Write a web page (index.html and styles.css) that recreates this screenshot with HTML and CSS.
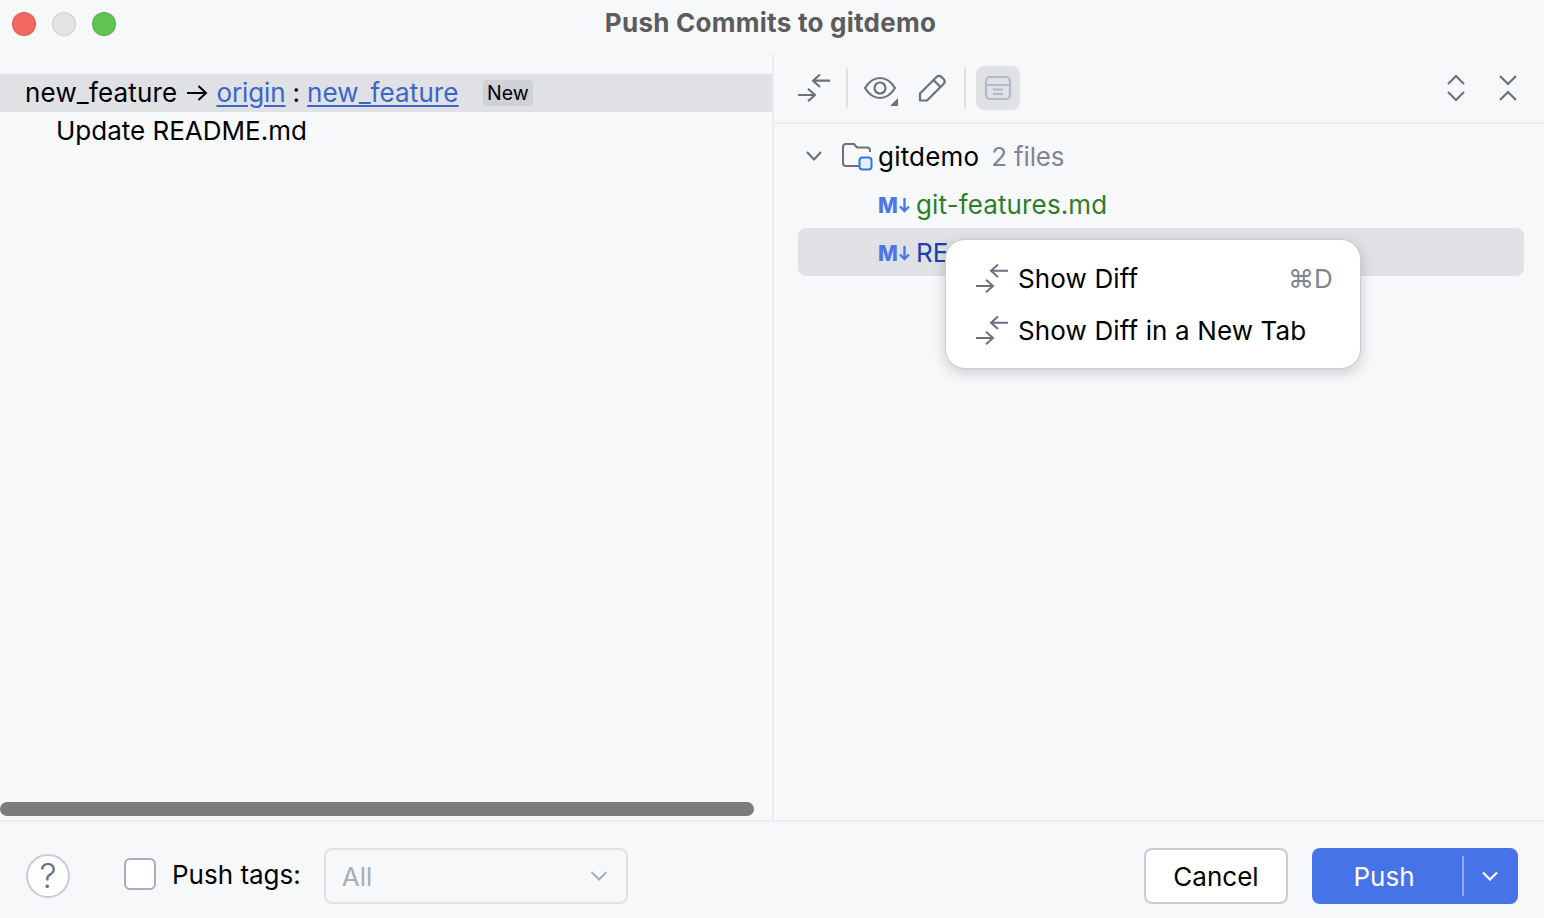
FILE: index.html
```html
<!DOCTYPE html>
<html lang="en">
<head>
    <meta charset="UTF-8">
    <meta name="viewport" content="width=device-width, initial-scale=1.0">
    <title>Push Commits to gitdemo</title>
    <link rel="stylesheet" href="styles.css">
</head>
<body>
    <div class="window">
        <div class="titlebar">
            <div class="lights">
                <span class="light red"></span>
                <span class="light grey"></span>
                <span class="light green"></span>
            </div>
            <div class="title">Push Commits to gitdemo</div>
        </div>

        <div class="main">
            <div class="commits">
                <div class="commit-list">
                    <div class="branch-row">
                        <span class="branch">new_feature</span>
                        <svg class="arrow" width="22" height="18" viewBox="0 0 22 18"><path d="M1 9H20M12.500 2L20 9L12.500 16"/></svg>
                        <a href="#" class="link origin">origin</a>
                        <span class="colon">:</span>
                        <a href="#" class="link target-branch">new_feature</a>
                        <span class="tag">New</span>
                    </div>
                    <div class="commit-row">Update README.md</div>
                </div>
                <div class="scrollbar"></div>
            </div>

            <div class="changes">
                <div class="toolbar">
                    <svg class="icon" width="32" height="32" viewBox="0 0 32 32"><path d="M32 8.700H15M22 2.500L15 8.700L22 15M0 23H17M10 16.800L17 23L10 29.200"/></svg>
                    <span class="sep"></span>
                    <svg class="icon eye" width="36" height="36" viewBox="0 0 36 36"><path d="M1 18C5 11.500 10 8 16 8C22 8 27 11.500 31 18C27 24.500 22 28 16 28C10 28 5 24.500 1 18Z"/><circle cx="16" cy="18" r="5.500"/><path class="fill" d="M34 28V36H26Z"/></svg>
                    <svg class="icon pencil" width="32" height="32" viewBox="0 0 32 32"><path d="M4 21.500L20.500 5C22 3.500 24 3.500 25.500 5L27.500 7C29 8.500 29 10.500 27.500 12L11 28.500H4ZM17.500 8L24.500 15"/></svg>
                    <span class="sep"></span>
                    <div class="toggle">
                        <svg class="icon-muted" width="28" height="28" viewBox="0 0 28 28"><rect x="2" y="3" width="24" height="22" rx="4"/><path d="M2 11H26M9 15.500H19M9 20H19"/></svg>
                    </div>
                    <div class="toolbar-end">
                        <svg class="icon" width="20" height="32" viewBox="0 0 20 32"><path d="M2 12L10 4L18 12M2 20L10 28L18 20"/></svg>
                        <svg class="icon" width="20" height="32" viewBox="0 0 20 32"><path d="M2 4L10 12L18 4M2 28L10 20L18 28"/></svg>
                    </div>
                </div>

                <div class="tree">
                    <div class="tree-row">
                        <svg class="chevron" width="18" height="12" viewBox="0 0 18 12"><path d="M2 2L9 9.500L16 2"/></svg>
                        <svg class="folder" width="32" height="30" viewBox="0 0 32 30"><path d="M28 11V9C28 7.300 27 6.500 25 6.500H15L12 3H4C2.300 3 1 4.300 1 6V22C1 23.700 2.300 25 4 25H18"/><rect x="17.500" y="16.500" width="12" height="12" rx="3"/></svg>
                        <span class="name">gitdemo</span>
                        <span class="count">2 files</span>
                    </div>
                    <div class="tree-row file">
                        <span class="md">M<svg width="11" height="16" viewBox="0 0 11 16"><path d="M5.500 1V14M1 9.500L5.500 14L10 9.500"/></svg></span>
                        <span class="added">git-features.md</span>
                    </div>
                    <div class="tree-row file selected">
                        <span class="md">M<svg width="11" height="16" viewBox="0 0 11 16"><path d="M5.500 1V14M1 9.500L5.500 14L10 9.500"/></svg></span>
                        <span class="modified">README.md</span>
                    </div>

                    <div class="popup">
                        <div class="popup-item">
                            <svg class="popup-icon" width="32" height="32" viewBox="0 0 32 32"><path d="M32 8.700H15M22 2.500L15 8.700L22 15M0 24H17M10 17.800L17 24L10 30.200"/></svg>
                            <span>Show Diff</span>
                            <span class="shortcut">⌘D</span>
                        </div>
                        <div class="popup-item">
                            <svg class="popup-icon" width="32" height="32" viewBox="0 0 32 32"><path d="M32 8.700H15M22 2.500L15 8.700L22 15M0 24H17M10 17.800L17 24L10 30.200"/></svg>
                            <span>Show Diff in a New Tab</span>
                        </div>
                    </div>
                </div>
            </div>
        </div>

        <div class="footer">
            <div class="help">?</div>
            <span class="checkbox"></span>
            <span class="tags-label">Push tags:</span>
            <div class="combo">
                <span>All</span>
                <svg width="18" height="12" viewBox="0 0 18 12"><path d="M1.500 2L9 9.500L16.500 2"/></svg>
            </div>
            <div class="footer-end">
                <button class="btn-cancel">Cancel</button>
                <div class="btn-push">
                    <span class="push-label">Push</span>
                    <span class="push-sep"></span>
                    <svg width="16" height="10" viewBox="0 0 16 10"><path d="M1 1.500L8 8.500L15 1.500"/></svg>
                </div>
            </div>
        </div>
    </div>
</body>
</html>
```

FILE: styles.css
```css
* {
    box-sizing: border-box;
}

body {
    margin: 0;
    font-family: Inter, "Liberation Sans", sans-serif;
    font-size: 26px;
    color: #000;
    background-color: #f7f8fa;
}

svg {
    display: block;
    flex: none;
    fill: none;
}

.window {
    display: flex;
    flex-direction: column;
    width: 1544px;
    height: 918px;
    overflow: hidden;
}

/* title bar */
.titlebar {
    display: flex;
    align-items: center;
    height: 54px;
    padding: 0 119px 7px 12px;
    flex: none;
}

.lights {
    display: flex;
    gap: 16px;
}

.light {
    width: 24px;
    height: 24px;
    border-radius: 50%;
    border: 1px solid rgba(0, 0, 0, 0.1);
}

.red {
    background: #f1685e;
}

.grey {
    background: #e3e3e3;
}

.green {
    background: #5fc454;
}

.title {
    flex: 1;
    margin-top: -2px;
    text-align: center;
    font-weight: 700;
    letter-spacing: 0.26px;
    color: #5c5c5c;
}

.main {
    display: flex;
    flex: 1;
    min-height: 0;
}

/* left side */
.commits {
    display: flex;
    flex-direction: column;
    width: 774px;
    border-right: 2px solid #ebecf0;
    padding-top: 20px;
}

.commit-list {
    flex: 1;
}

.branch-row {
    display: flex;
    align-items: center;
    height: 38px;
    padding: 0 0 2px 25px;
    background: #dfe1e5;
}

.branch {
    letter-spacing: 0.18px;
}

.target-branch {
    letter-spacing: 0.1px;
}

.origin {
    letter-spacing: -0.1px;
}

.arrow {
    margin: 2px 8px 0 9px;
    stroke: #000;
    stroke-width: 2;
}

.link {
    color: #3a66c9;
    text-decoration: underline;
    text-decoration-thickness: 2px;
    text-underline-offset: 3px;
}

.colon {
    margin: 0 7px;
}

.tag {
    margin: 2px 0 0 24px;
    padding: 0 4.500px;
    height: 26px;
    line-height: 26px;
    font-size: 19.500px;
    background: #cfd1d6;
    border-radius: 4px;
}

.commit-row {
    height: 38px;
    line-height: 38px;
    padding-left: 56px;
}

.scrollbar {
    width: 754px;
    height: 14px;
    margin-bottom: 4px;
    background: #7b7c7e;
    border-radius: 7px;
}

/* right side */
.changes {
    position: relative;
    flex: 1;
}

.toolbar {
    display: flex;
    align-items: center;
    height: 70px;
    padding: 0 20px 0 24px;
    border-bottom: 2px solid #ebecf0;
}

.icon {
    stroke: #6c707e;
    stroke-width: 2.2;
    stroke-linejoin: round;
}

.icon .fill {
    fill: #6c707e;
    stroke: none;
}

.eye {
    margin-left: 16px;
}

.pencil {
    margin-left: 16px;
}

.sep {
    width: 2px;
    height: 40px;
    margin-left: 16px;
    background: #dfe1e5;
}

.toggle {
    display: flex;
    align-items: center;
    justify-content: center;
    width: 44px;
    height: 44px;
    margin-left: 10px;
    background: #dfe1e5;
    border-radius: 8px;
}

.icon-muted {
    stroke: #b4b8c4;
    stroke-width: 2.2;
}

.toolbar-end {
    display: flex;
    gap: 32px;
    margin-left: auto;
    padding-right: 6px;
}

.tree {
    padding: 8px 20px 0 24px;
}

.tree-row {
    display: flex;
    align-items: center;
    height: 48px;
}

.chevron {
    margin-left: 7px;
    stroke: #6c707e;
    stroke-width: 2.2;
}

.folder {
    margin-left: 19px;
    stroke: #6c707e;
    stroke-width: 2;
}

.folder rect {
    fill: #e7effd;
    stroke: #3574f0;
}

.name {
    margin-left: 4px;
    letter-spacing: 0.2px;
}

.count {
    margin-left: 12px;
    letter-spacing: -0.2px;
    color: #818594;
}

.file {
    padding-left: 80px;
}

.selected {
    background: #dfe1e5;
    border-radius: 8px;
}

.md {
    display: flex;
    align-items: center;
    width: 38px;
    padding-top: 2px;
    font-size: 21px;
    font-weight: 800;
    color: #4a78e8;
}

.md svg {
    margin-left: 1px;
    stroke: #4a78e8;
    stroke-width: 2.4;
}

.added {
    letter-spacing: 0.13px;
    color: #2f7d2a;
}

.modified {
    color: #1a3fb0;
}

/* context menu */
.popup {
    position: absolute;
    left: 171px;
    top: 185px;
    width: 416px;
    height: 130px;
    padding: 12px 27px 12px 30px;
    background: #fff;
    border-radius: 20px;
    border: 1px solid #c9ccd3;
    box-shadow: 0 4px 14px rgba(0, 0, 0, 0.18);
    letter-spacing: 0.13px;
}

.popup-item {
    display: flex;
    align-items: center;
    height: 52px;
}

.popup-icon {
    margin-right: 10px;
    stroke: #6c707e;
    stroke-width: 2;
}

.shortcut {
    margin-left: auto;
    color: #818594;
}

/* bottom bar */
.footer {
    display: flex;
    align-items: center;
    flex: none;
    height: 98px;
    padding: 12px 26px 0 26px;
    border-top: 2px solid #ebecf0;
}

.help {
    width: 44px;
    height: 44px;
    line-height: 40px;
    text-align: center;
    font-size: 34px;
    font-weight: 300;
    color: #6c707e;
    background: #fff;
    border: 2px solid #c9ccd6;
    border-radius: 50%;
}

.checkbox {
    width: 32px;
    height: 32px;
    margin: -4px 0 0 54px;
    background: #fff;
    border: 2px solid #a8adbd;
    border-radius: 6px;
}

.tags-label {
    margin: -4px 0 0 16px;
}

.combo {
    display: flex;
    align-items: center;
    justify-content: space-between;
    width: 304px;
    height: 56px;
    margin-left: 23px;
    padding: 0 18px 0 16px;
    color: #a8adbd;
    border: 2px solid #dfe1e5;
    border-radius: 8px;
}

.combo svg {
    stroke: #a8adbd;
    stroke-width: 2;
}

.footer-end {
    display: flex;
    gap: 24px;
    margin-left: auto;
}

.btn-cancel {
    width: 144px;
    height: 56px;
    padding: 0;
    font: inherit;
    color: #000;
    background: #fff;
    border: 2px solid #c9ccd6;
    border-radius: 8px;
}

.btn-push {
    display: flex;
    align-items: center;
    width: 206px;
    height: 56px;
    color: #fff;
    background: #4674e8;
    border-radius: 8px;
}

.push-label {
    width: 144px;
    margin-right: 6px;
    text-align: center;
}

.push-sep {
    width: 2px;
    height: 40px;
    background: #8facf0;
}

.btn-push svg {
    margin-left: 18px;
    stroke: #fff;
    stroke-width: 2.2;
}
```
